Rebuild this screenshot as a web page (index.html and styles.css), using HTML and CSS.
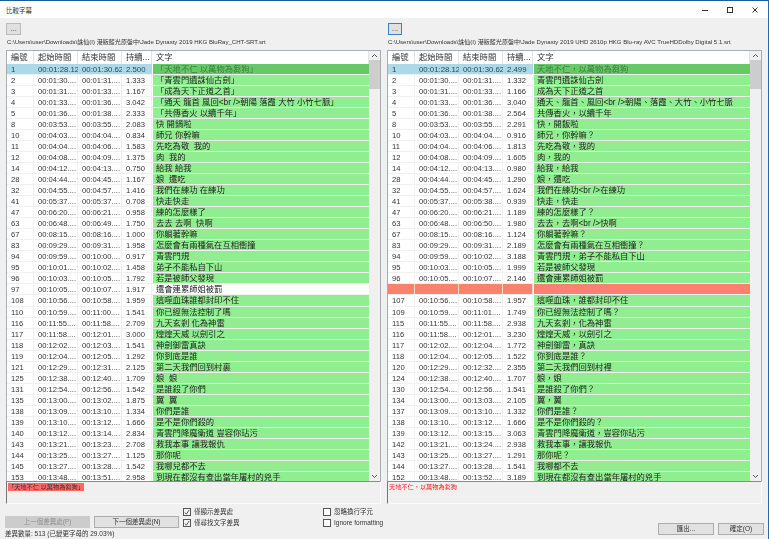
FILE: index.html
```html
<!DOCTYPE html>
<html lang="zh-Hant">
<head>
<meta charset="utf-8">
<title>比較字幕</title>
<link rel="stylesheet" href="styles.css">
</head>
<body>
<div class="window">
  <header class="titlebar">
    <span class="title">比較字幕</span>
    <div class="controls">
      <svg class="ctl" width="8" height="8" viewBox="0 0 8 8"><path d="M1 4.5h6" stroke="#333" fill="none"/></svg>
      <svg class="ctl" width="8" height="8" viewBox="0 0 8 8"><rect x="1.5" y="1.5" width="5" height="5" stroke="#333" fill="none"/></svg>
      <svg class="ctl" width="8" height="8" viewBox="0 0 8 8"><path d="M1.500 1.500l5 5M6.500 1.500l-5 5" stroke="#333" fill="none"/></svg>
    </div>
  </header>
  <main class="panes">
    <section class="pane">
      <button class="dots">...</button>
      <div class="path">C:\Users\user\Downloads\誅仙(I) 港版藍光原盤中\Jade Dynasty 2019 HKG BluRay_CHT-SRT.srt</div>
      <div class="list">
        <div class="table">
          <div class="row head"><span>編號</span><span>起始時間</span><span>結束時間</span><span>持續...</span><span>文字</span></div>
          <div class="row sel"><span>1</span><span>00:01:28.123</span><span>00:01:30.623</span><span>2.500</span><span class="txt">「天地不仁 以萬物為芻狗」</span></div>
          <div class="row"><span>2</span><span>00:01:30....</span><span>00:01:31....</span><span>1.333</span><span class="txt">「青雲門遺誅仙古劍」</span></div>
          <div class="row"><span>3</span><span>00:01:31....</span><span>00:01:33....</span><span>1.167</span><span class="txt">「成為天下正道之首」</span></div>
          <div class="row"><span>4</span><span>00:01:33....</span><span>00:01:36....</span><span>3.042</span><span class="txt">「通天 龍首 風回&lt;br /&gt;朝陽 落霞 大竹 小竹七脈」</span></div>
          <div class="row"><span>5</span><span>00:01:36....</span><span>00:01:38....</span><span>2.333</span><span class="txt">「共傳香火 以續千年」</span></div>
          <div class="row"><span>8</span><span>00:03:53....</span><span>00:03:55....</span><span>2.083</span><span class="txt">快 開鍋啦</span></div>
          <div class="row"><span>10</span><span>00:04:03....</span><span>00:04:04....</span><span>0.834</span><span class="txt">師兄 你幹嘛</span></div>
          <div class="row"><span>11</span><span>00:04:04....</span><span>00:04:06....</span><span>1.583</span><span class="txt">先吃為敬 &nbsp;我的</span></div>
          <div class="row"><span>12</span><span>00:04:08....</span><span>00:04:09....</span><span>1.375</span><span class="txt">肉 &nbsp;我的</span></div>
          <div class="row"><span>14</span><span>00:04:12....</span><span>00:04:13....</span><span>0.750</span><span class="txt">給我 給我</span></div>
          <div class="row"><span>28</span><span>00:04:44....</span><span>00:04:45....</span><span>1.167</span><span class="txt">娘 &nbsp;還吃</span></div>
          <div class="row"><span>32</span><span>00:04:55....</span><span>00:04:57....</span><span>1.416</span><span class="txt">我們在練功 在練功</span></div>
          <div class="row"><span>41</span><span>00:05:37....</span><span>00:05:37....</span><span>0.708</span><span class="txt">快走快走</span></div>
          <div class="row"><span>47</span><span>00:06:20....</span><span>00:06:21....</span><span>0.958</span><span class="txt">練的怎麼樣了</span></div>
          <div class="row"><span>63</span><span>00:06:48....</span><span>00:06:49....</span><span>1.750</span><span class="txt">去去 去啊 &nbsp;快啊</span></div>
          <div class="row"><span>67</span><span>00:08:15....</span><span>00:08:16....</span><span>1.000</span><span class="txt">你躺著幹嘛</span></div>
          <div class="row"><span>83</span><span>00:09:29....</span><span>00:09:31....</span><span>1.958</span><span class="txt">怎麼會有兩種氣在互相衝撞</span></div>
          <div class="row"><span>94</span><span>00:09:59....</span><span>00:10:00....</span><span>0.917</span><span class="txt">青雲門規</span></div>
          <div class="row"><span>95</span><span>00:10:01....</span><span>00:10:02....</span><span>1.458</span><span class="txt">弟子不能私自下山</span></div>
          <div class="row"><span>96</span><span>00:10:03....</span><span>00:10:05....</span><span>1.792</span><span class="txt">若是被師父發現</span></div>
          <div class="row plain"><span>97</span><span>00:10:05....</span><span>00:10:07....</span><span>1.917</span><span class="txt">還會連累師姐被罰</span></div>
          <div class="row"><span>108</span><span>00:10:56....</span><span>00:10:58....</span><span>1.959</span><span class="txt">這噬血珠誰都封印不住</span></div>
          <div class="row"><span>110</span><span>00:10:59....</span><span>00:11:00....</span><span>1.541</span><span class="txt">你已經無法控制了嗎</span></div>
          <div class="row"><span>116</span><span>00:11:55....</span><span>00:11:58....</span><span>2.709</span><span class="txt">九天玄剎 化為神雷</span></div>
          <div class="row"><span>117</span><span>00:11:58....</span><span>00:12:01....</span><span>3.000</span><span class="txt">煌煌天威 以劍引之</span></div>
          <div class="row"><span>118</span><span>00:12:02....</span><span>00:12:03....</span><span>1.541</span><span class="txt">神劍御雷真訣</span></div>
          <div class="row"><span>119</span><span>00:12:04....</span><span>00:12:05....</span><span>1.292</span><span class="txt">你到底是誰</span></div>
          <div class="row"><span>121</span><span>00:12:29....</span><span>00:12:31....</span><span>2.125</span><span class="txt">第二天我們回到村裏</span></div>
          <div class="row"><span>125</span><span>00:12:38....</span><span>00:12:40....</span><span>1.709</span><span class="txt">娘 &nbsp;娘</span></div>
          <div class="row"><span>131</span><span>00:12:54....</span><span>00:12:56....</span><span>1.542</span><span class="txt">是誰殺了你們</span></div>
          <div class="row"><span>135</span><span>00:13:00....</span><span>00:13:02....</span><span>1.875</span><span class="txt">翼 &nbsp;翼</span></div>
          <div class="row"><span>138</span><span>00:13:09....</span><span>00:13:10....</span><span>1.334</span><span class="txt">你們是誰</span></div>
          <div class="row"><span>139</span><span>00:13:10....</span><span>00:13:12....</span><span>1.666</span><span class="txt">是不是你們殺的</span></div>
          <div class="row"><span>140</span><span>00:13:12....</span><span>00:13:14....</span><span>2.834</span><span class="txt">青雲門降魔衛道 豈容你玷污</span></div>
          <div class="row"><span>143</span><span>00:13:21....</span><span>00:13:23....</span><span>2.708</span><span class="txt">救我本事 讓我報仇</span></div>
          <div class="row"><span>144</span><span>00:13:25....</span><span>00:13:27....</span><span>1.125</span><span class="txt">那你呢</span></div>
          <div class="row"><span>145</span><span>00:13:27....</span><span>00:13:28....</span><span>1.542</span><span class="txt">我哪兒都不去</span></div>
          <div class="row"><span>153</span><span>00:13:48....</span><span>00:13:51....</span><span>2.958</span><span class="txt">到現在都沒有查出當年屠村的兇手</span></div>
        </div>
        <div class="scroll">
          <svg class="arrow" width="11" height="9" viewBox="0 0 11 9"><path d="M3 6l2.500-2.500 2.500 2.500" stroke="#555" fill="none"/></svg>
          <div class="thumb"></div>
          <svg class="arrow down" width="11" height="9" viewBox="0 0 11 9"><path d="M3 3l2.500 2.500 2.500-2.500" stroke="#555" fill="none"/></svg>
        </div>
      </div>
      <div class="diff"><span class="mark">「天地不仁 以萬物為芻狗」</span></div>
    </section>
    <section class="pane">
      <button class="dots focus">...</button>
      <div class="path">C:\Users\user\Downloads\誅仙(I) 港版藍光原盤中\Jade Dynasty 2019 UHD 2610p HKG Blu-ray AVC TrueHDDolby Digital 5.1.srt</div>
      <div class="list">
        <div class="table">
          <div class="row head"><span>編號</span><span>起始時間</span><span>結束時間</span><span>持續...</span><span>文字</span></div>
          <div class="row sel"><span>1</span><span>00:01:28.123</span><span>00:01:30.622</span><span>2.499</span><span class="txt">天地不仁，以萬物為芻狗</span></div>
          <div class="row"><span>2</span><span>00:01:30....</span><span>00:01:31....</span><span>1.332</span><span class="txt">青雲門遺誅仙古劍</span></div>
          <div class="row"><span>3</span><span>00:01:31....</span><span>00:01:33....</span><span>1.166</span><span class="txt">成為天下正道之首</span></div>
          <div class="row"><span>4</span><span>00:01:33....</span><span>00:01:36....</span><span>3.040</span><span class="txt">通天、龍首、風回&lt;br /&gt;朝陽、落霞、大竹、小竹七脈</span></div>
          <div class="row"><span>5</span><span>00:01:36....</span><span>00:01:38....</span><span>2.564</span><span class="txt">共傳香火，以續千年</span></div>
          <div class="row"><span>8</span><span>00:03:53....</span><span>00:03:55....</span><span>2.291</span><span class="txt">快，開飯啦</span></div>
          <div class="row"><span>10</span><span>00:04:03....</span><span>00:04:04....</span><span>0.916</span><span class="txt">師兄，你幹嘛？</span></div>
          <div class="row"><span>11</span><span>00:04:04....</span><span>00:04:06....</span><span>1.813</span><span class="txt">先吃為敬，我的</span></div>
          <div class="row"><span>12</span><span>00:04:08....</span><span>00:04:09....</span><span>1.605</span><span class="txt">肉，我的</span></div>
          <div class="row"><span>14</span><span>00:04:12....</span><span>00:04:13....</span><span>0.980</span><span class="txt">給我，給我</span></div>
          <div class="row"><span>28</span><span>00:04:44....</span><span>00:04:45....</span><span>1.290</span><span class="txt">娘，還吃</span></div>
          <div class="row"><span>32</span><span>00:04:55....</span><span>00:04:57....</span><span>1.624</span><span class="txt">我們在練功&lt;br /&gt;在練功</span></div>
          <div class="row"><span>41</span><span>00:05:37....</span><span>00:05:38....</span><span>0.939</span><span class="txt">快走，快走</span></div>
          <div class="row"><span>47</span><span>00:06:20....</span><span>00:06:21....</span><span>1.189</span><span class="txt">練的怎麼樣了？</span></div>
          <div class="row"><span>63</span><span>00:06:48....</span><span>00:06:50....</span><span>1.980</span><span class="txt">去去，去啊&lt;br /&gt;快啊</span></div>
          <div class="row"><span>67</span><span>00:08:15....</span><span>00:08:16....</span><span>1.124</span><span class="txt">你躺著幹嘛？</span></div>
          <div class="row"><span>83</span><span>00:09:29....</span><span>00:09:31....</span><span>2.189</span><span class="txt">怎麼會有兩種氣在互相衝撞？</span></div>
          <div class="row"><span>94</span><span>00:09:59....</span><span>00:10:02....</span><span>3.188</span><span class="txt">青雲門規，弟子不能私自下山</span></div>
          <div class="row"><span>95</span><span>00:10:03....</span><span>00:10:05....</span><span>1.999</span><span class="txt">若是被師父發現</span></div>
          <div class="row"><span>96</span><span>00:10:05....</span><span>00:10:07....</span><span>2.146</span><span class="txt">還會連累師姐被罰</span></div>
          <div class="row gap"><span></span><span></span><span></span><span></span><span class="txt"></span></div>
          <div class="row"><span>107</span><span>00:10:56....</span><span>00:10:58....</span><span>1.957</span><span class="txt">這噬血珠，誰都封印不住</span></div>
          <div class="row"><span>109</span><span>00:10:59....</span><span>00:11:01....</span><span>1.749</span><span class="txt">你已經無法控制了嗎？</span></div>
          <div class="row"><span>115</span><span>00:11:55....</span><span>00:11:58....</span><span>2.938</span><span class="txt">九天玄剎，化為神雷</span></div>
          <div class="row"><span>116</span><span>00:11:58....</span><span>00:12:01....</span><span>3.230</span><span class="txt">煌煌天威，以劍引之</span></div>
          <div class="row"><span>117</span><span>00:12:02....</span><span>00:12:04....</span><span>1.772</span><span class="txt">神劍御雷，真訣</span></div>
          <div class="row"><span>118</span><span>00:12:04....</span><span>00:12:05....</span><span>1.522</span><span class="txt">你到底是誰？</span></div>
          <div class="row"><span>120</span><span>00:12:29....</span><span>00:12:32....</span><span>2.355</span><span class="txt">第二天我們回到村裡</span></div>
          <div class="row"><span>124</span><span>00:12:38....</span><span>00:12:40....</span><span>1.707</span><span class="txt">娘，娘</span></div>
          <div class="row"><span>130</span><span>00:12:54....</span><span>00:12:56....</span><span>1.541</span><span class="txt">是誰殺了你們？</span></div>
          <div class="row"><span>134</span><span>00:13:00....</span><span>00:13:03....</span><span>2.105</span><span class="txt">翼，翼</span></div>
          <div class="row"><span>137</span><span>00:13:09....</span><span>00:13:10....</span><span>1.332</span><span class="txt">你們是誰？</span></div>
          <div class="row"><span>138</span><span>00:13:10....</span><span>00:13:12....</span><span>1.666</span><span class="txt">是不是你們殺的？</span></div>
          <div class="row"><span>139</span><span>00:13:12....</span><span>00:13:15....</span><span>3.063</span><span class="txt">青雲門降魔衛道，豈容你玷污</span></div>
          <div class="row"><span>142</span><span>00:13:21....</span><span>00:13:24....</span><span>2.938</span><span class="txt">救我本事，讓我報仇</span></div>
          <div class="row"><span>143</span><span>00:13:25....</span><span>00:13:27....</span><span>1.291</span><span class="txt">那你呢？</span></div>
          <div class="row"><span>144</span><span>00:13:27....</span><span>00:13:28....</span><span>1.541</span><span class="txt">我哪都不去</span></div>
          <div class="row"><span>152</span><span>00:13:48....</span><span>00:13:52....</span><span>3.189</span><span class="txt">到現在都沒有查出當年屠村的兇手</span></div>
        </div>
        <div class="scroll">
          <svg class="arrow" width="11" height="9" viewBox="0 0 11 9"><path d="M3 6l2.500-2.500 2.500 2.500" stroke="#555" fill="none"/></svg>
          <div class="thumb"></div>
          <svg class="arrow down" width="11" height="9" viewBox="0 0 11 9"><path d="M3 3l2.500 2.500 2.500-2.500" stroke="#555" fill="none"/></svg>
        </div>
      </div>
      <div class="diff"><span class="redtext">天地不仁，以萬物為芻狗</span></div>
    </section>
  </main>
  <footer class="footer">
    <div class="footer-left">
      <div class="actions">
        <button class="btn nav" disabled>上一個差異處(P)</button>
        <button class="btn nav">下一個差異處(N)</button>
        <div class="checks">
          <label class="check"><span class="box on"><svg width="7" height="7" viewBox="0 0 7 7"><path d="M1 3.500l1.800 2 3.200-5" stroke="#444" fill="none"/></svg></span>僅顯示差異處</label>
          <label class="check"><span class="box on"><svg width="7" height="7" viewBox="0 0 7 7"><path d="M1 3.500l1.800 2 3.200-5" stroke="#444" fill="none"/></svg></span>僅尋找文字差異</label>
        </div>
        <div class="checks">
          <label class="check"><span class="box"></span>忽略換行字元</label>
          <label class="check"><span class="box"></span>Ignore formatting</label>
        </div>
      </div>
      <div class="status">差異數量: 513 (已變更字母的 29.03%)</div>
    </div>
    <div class="footer-right">
      <button class="btn export">匯出...</button>
      <button class="btn ok">確定(O)</button>
    </div>
  </footer>
</div>
</body>
</html>
```
FILE: styles.css
```css
* { box-sizing: border-box; }
html, body { margin: 0; padding: 0; }
body {
  width: 769px;
  height: 539px;
  overflow: hidden;
  font-family: "Liberation Sans", "Noto Sans CJK TC", sans-serif;
  font-size: 8px;
  color: #222;
  background: #f0f0f0;
}
.window {
  display: flex;
  flex-direction: column;
  width: 769px;
  height: 539px;
  border-top: 1px solid #1a5c9e;
  border-right: 1px solid #2a6aa8;
  filter: blur(0.3px);
}
.titlebar {
  display: flex;
  align-items: center;
  justify-content: space-between;
  height: 17px;
  padding-left: 6px;
  background: #fff;
  color: #333;
  font-size: 6.500px;
}
.controls { display: flex; gap: 17px; padding-right: 9px; }
.ctl { display: block; }
.panes {
  display: flex;
  gap: 6px;
  padding: 5px 0 0 6px;
}
.pane {
  display: flex;
  flex-direction: column;
  width: 375px;
}
.dots {
  width: 15px;
  height: 12px;
  padding: 0;
  font: 8px/8px "Liberation Sans", sans-serif;
  color: #444;
  background: #e1e1e1;
  border: 1px solid #bbb;
}
.dots.focus {
  width: 14px;
  margin-left: 1px;
  border-color: #3a80c8;
}
.path {
  height: 15px;
  padding: 2px 0 0 1px;
  font-size: 6.050px;
  line-height: 10px;
  white-space: nowrap;
  overflow: hidden;
  color: #333;
}
.list {
  display: flex;
  height: 431px;
  background: #fff;
  border: 1px solid #a8adb3;
  border-bottom: 0;
}
.table {
  flex: 1;
  min-width: 0;
  overflow: hidden;
}
.row {
  display: grid;
  grid-template-columns: 27px 44px 44px 30px 1fr;
  grid-template-rows: minmax(0, 1fr);
  height: 11.050px;
  font-size: 7.600px;
  line-height: 11.500px;
  border-bottom: 1px solid #f0f0f0;
  color: #333;
}
.row > span {
  padding-left: 4px;
  overflow: hidden;
  white-space: nowrap;
  border-right: 1px solid #f0f0f0;
}
.row > .txt {
  margin-left: 1px;
  padding-left: 3px;
  font-size: 8.300px;
  background: #90ee90;
  color: #222;
  border-right: 0;
}
.head {
  height: 12.500px;
  font-size: 8.300px;
  line-height: 12px;
  color: #333;
  border-bottom: 0;
}
.head > span { border-right: 1px solid #e3e3e3; }
.head > .txt { font-size: 8.300px; }
.sel { font-size: 7.800px; }
.sel > span {
  background: #add8e6;
  color: #2c4a55;
  border-right: 0;
}
.sel > .txt { background: #66c868; color: #3c7c3e; }
.row.plain > .txt { background: #fff; }
.gap > span { background: #fa8072; border-right: 1px solid #fbd9d4; }
.row.gap > .txt { background: #fa8072; border-right: 0; }
.scroll {
  display: flex;
  flex-direction: column;
  flex: none;
  width: 11px;
  background: #f0f0f0;
}
.arrow { display: block; flex: none; }
.thumb {
  flex: none;
  width: 11px;
  height: 29px;
  background: #cdcdcd;
}
.arrow.down { margin-top: auto; }
.diff {
  height: 23px;
  padding: 1px 0 0 1px;
  font-size: 6.200px;
  line-height: 8px;
  background: #f0f0f0;
  border-top: 1px solid #8a8a8a;
  border-left: 1px solid #777;
  border-right: 1px solid #fafafa;
  border-bottom: 1px solid #fafafa;
}
.mark { display: inline-block; background: #ff6666; color: #333; }
.redtext { color: #f01818; }
.footer {
  display: flex;
  justify-content: space-between;
  flex: 1;
  padding-left: 5px;
}
.footer-left { display: flex; flex-direction: column; padding-top: 4px; }
.actions {
  display: flex;
  align-items: flex-end;
  height: 20px;
}
.btn {
  padding: 0;
  font: 6.500px/10px "Liberation Sans", "Noto Sans CJK TC", sans-serif;
  color: #333;
  background: #e1e1e1;
  border: 1px solid #adadad;
}
.nav { width: 85px; height: 12px; margin-right: 4px; }
.nav[disabled] { color: #8f8f8f; background: #cccccc; border-color: #cccccc; }
.checks {
  display: flex;
  flex-direction: column;
  gap: 3px;
  width: 140px;
  margin-bottom: 1px;
}
.check {
  display: flex;
  align-items: center;
  gap: 3px;
  height: 8px;
  font-size: 6.500px;
  line-height: 8px;
  color: #333;
}
.box {
  display: flex;
  align-items: center;
  justify-content: center;
  width: 8px;
  height: 8px;
  background: #fff;
  border: 1px solid #555;
}
.box.on { background: #f4f4f4; }
.status {
  margin-top: 1px;
  font-size: 6.500px;
  line-height: 9px;
  color: #333;
}
.footer-right {
  display: flex;
  gap: 4px;
  padding: 19px 4px 0 0;
}
.export { width: 56px; height: 12px; }
.ok { width: 46px; height: 12px; }
```
